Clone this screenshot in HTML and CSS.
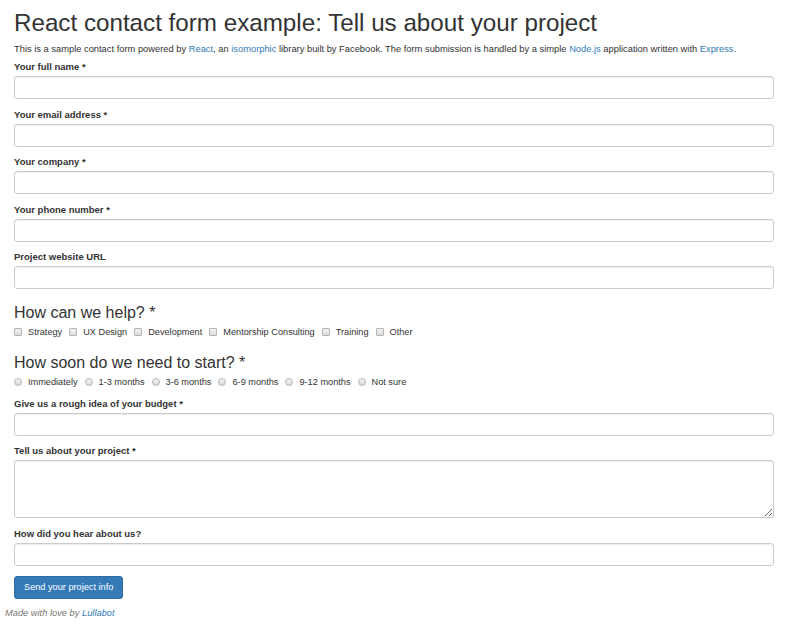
FILE: index.html
```html
<!DOCTYPE html>
<html>
	<head>
		<meta charset="UTF-8">
		<title>React contact form example</title>
		<link rel="stylesheet" href="styles.css">
	</head>
	<body>
		<div class="container">
			<h1>React contact form example: Tell us about your project</h1>
			<p class="intro">This is a sample contact form powered by <a href="#">React</a>, an <a href="#">isomorphic</a> library built by Facebook. The form submission is handled by a simple <a href="#">Node.js</a> application written with <a href="#">Express</a>.</p>
			<form class="contactForm">
				<div class="formGroup">
					<label>Your full name *</label>
					<input type="text" class="formControl" />
				</div>
				<div class="formGroup">
					<label>Your email address *</label>
					<input type="text" class="formControl" />
				</div>
				<div class="formGroup">
					<label>Your company *</label>
					<input type="text" class="formControl" />
				</div>
				<div class="formGroup">
					<label>Your phone number *</label>
					<input type="text" class="formControl" />
				</div>
				<div class="formGroup">
					<label>Project website URL</label>
					<input type="text" class="formControl" />
				</div>

				<h3>How can we help? *</h3>
				<div class="choices">
					<span class="choice"><input type="checkbox" class="box" />Strategy</span>
					<span class="choice"><input type="checkbox" class="box" />UX Design</span>
					<span class="choice"><input type="checkbox" class="box" />Development</span>
					<span class="choice"><input type="checkbox" class="box" />Mentorship Consulting</span>
					<span class="choice"><input type="checkbox" class="box" />Training</span>
					<span class="choice"><input type="checkbox" class="box" />Other</span>
				</div>

				<h3>How soon do we need to start? *</h3>
				<div class="choices radios">
					<span class="choice"><input type="radio" name="soon" class="dot" />Immediately</span>
					<span class="choice"><input type="radio" name="soon" class="dot" />1-3 months</span>
					<span class="choice"><input type="radio" name="soon" class="dot" />3-6 months</span>
					<span class="choice"><input type="radio" name="soon" class="dot" />6-9 months</span>
					<span class="choice"><input type="radio" name="soon" class="dot" />9-12 months</span>
					<span class="choice"><input type="radio" name="soon" class="dot" />Not sure</span>
				</div>

				<div class="formGroup budget">
					<label>Give us a rough idea of your budget *</label>
					<input type="text" class="formControl" />
				</div>
				<div class="formGroup">
					<label>Tell us about your project *</label>
					<textarea class="formControl area"></textarea>
				</div>
				<div class="formGroup">
					<label>How did you hear about us?</label>
					<input type="text" class="formControl" />
				</div>
				<button type="button" class="sendBtn">Send your project info</button>
			</form>
		</div>
		<p class="madeBy">Made with love by <a href="#">Lullabot</a></p>
	</body>
</html>
```
FILE: styles.css
```css
*{
	margin: 0px;
	padding: 0px;
	box-sizing: border-box;
}
body{
	font-family: "Liberation Sans", Arial, sans-serif;
	font-size: 10px;
	color: #333;
	background: #fff;
}
a{
	color: #337ab7;
	text-decoration: none;
}
.container{
	padding: 0 14px;
}
h1{
	font-size: 24.2px;
	font-weight: normal;
	line-height: 26px;
	padding-top: 10px;
}
.intro{
	font-size: 9.33px;
	line-height: 14px;
	margin-top: 6px;
}
.contactForm{
	padding-top: 4px;
}
.formGroup{
	margin-bottom: 8.5px;
}
.formGroup label{
	display: block;
	font-weight: bold;
	font-size: 9.5px;
	line-height: 14px;
	margin-bottom: 2px;
}
.formControl{
	display: block;
	width: 100%;
	height: 23px;
	border: 1px solid #ccc;
	border-radius: 3px;
	background: #fff;
	box-shadow: inset 0 1px 1px rgba(0,0,0,0.075);
	font-family: inherit;
}
.area{
	height: 58px;
	resize: vertical;
}
h3{
	font-size: 16px;
	font-weight: normal;
	line-height: 20px;
	margin-top: 14px;
}
.choices{
	display: flex;
	align-items: center;
	font-size: 9.2px;
	line-height: 14px;
	margin-top: 1.5px;
	margin-bottom: 0px;
}
.radios{
	margin-top: 2px;
}
.choice{
	display: flex;
	align-items: center;
	margin-right: 7px;
}
.box, .dot{
	appearance: none;
	-webkit-appearance: none;
	width: 8px;
	height: 8px;
	margin-right: 6px;
	border: 1px solid #b5b5b5;
	background: linear-gradient(#f4f4f4, #dcdcdc);
}
.box{
	border-radius: 1px;
}
.dot{
	border-radius: 50%;
}
.budget{
	margin-top: 8px;
}
.sendBtn{
	display: block;
	margin-top: 10px;
	padding: 0 9px;
	height: 23px;
	font-family: inherit;
	font-size: 9.2px;
	color: #fff;
	background: #337ab7;
	border: 1px solid #2e6da4;
	border-radius: 3px;
}
.madeBy{
	padding-left: 5px;
	margin-top: 9px;
	font-size: 9.3px;
	font-style: italic;
	color: #777;
}
```
